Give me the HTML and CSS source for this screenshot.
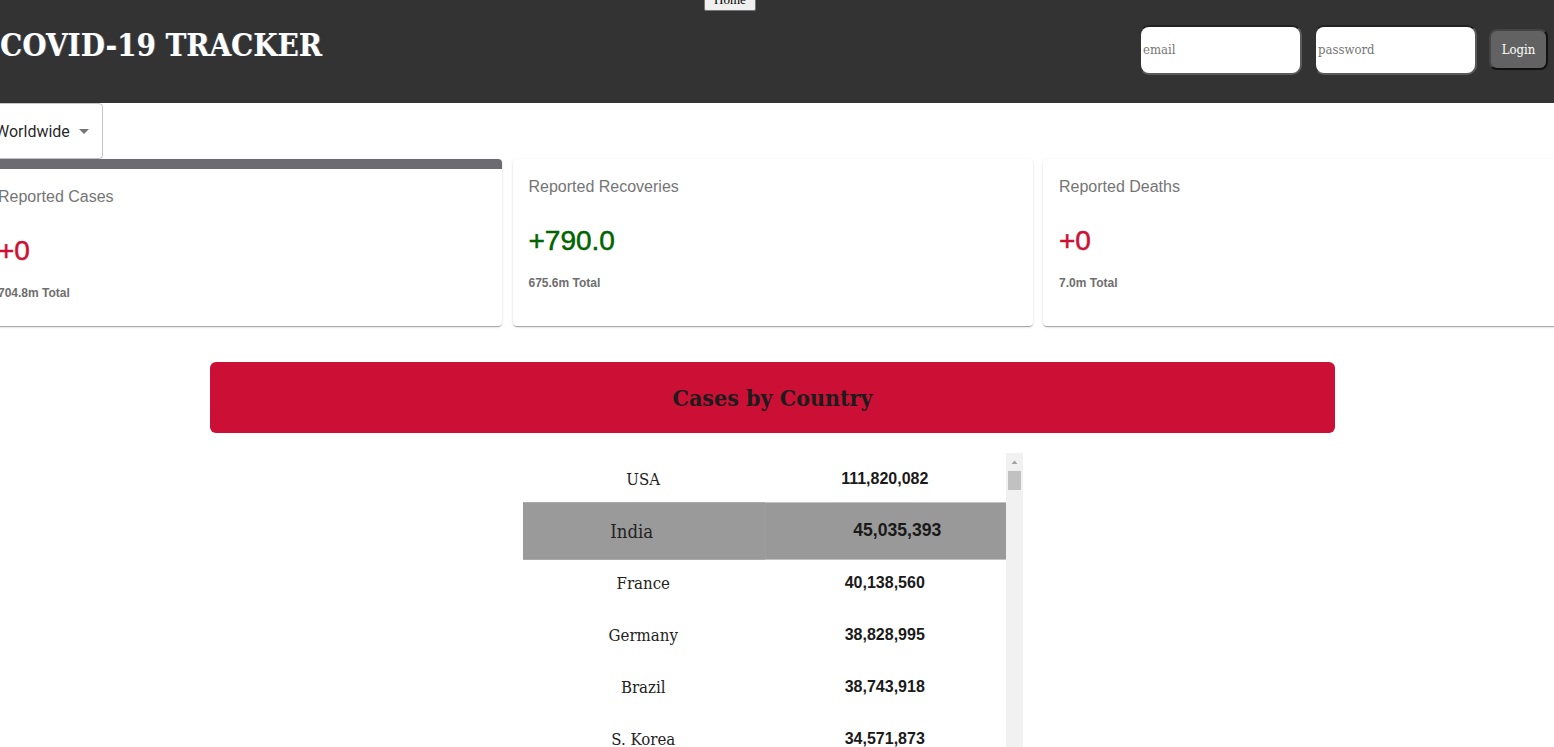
FILE: index.html
```html
<!DOCTYPE html>
<html>
<head>
<meta charset="utf-8">
<link rel="stylesheet" href="styles.css">
</head>
<body>
<header class="topbar">
  <button class="home-btn">Home</button>
  <h1 class="brand">COVID-19 TRACKER</h1>
  <form class="login">
    <input class="field" type="text" placeholder="email">
    <input class="field" type="password" placeholder="password">
    <button class="login-btn" type="button">Login</button>
  </form>
</header>
<main class="main">
  <div class="select">
    <span class="select-text">Worldwide</span>
    <svg class="caret" width="10" height="5" viewBox="0 0 10 5"><path d="M0 0h10L5 5z" fill="#757575"/></svg>
  </div>
  <section class="cards">
    <div class="card card-active">
      <div class="card-title">Reported Cases</div>
      <div class="card-value red">+0</div>
      <div class="card-total">704.8m Total</div>
    </div>
    <div class="card">
      <div class="card-title">Reported Recoveries</div>
      <div class="card-value green">+790.0</div>
      <div class="card-total">675.6m Total</div>
    </div>
    <div class="card">
      <div class="card-title">Reported Deaths</div>
      <div class="card-value red">+0</div>
      <div class="card-total">7.0m Total</div>
    </div>
  </section>
  <div class="banner">Cases by Country</div>
  <div class="table-wrap">
    <div class="table-view">
      <table class="table">
        <tbody>
          <tr><td class="country">USA</td><td class="num">111,820,082</td></tr>
          <tr class="hover"><td class="country">India</td><td class="num">45,035,393</td></tr>
          <tr><td class="country">France</td><td class="num">40,138,560</td></tr>
          <tr><td class="country">Germany</td><td class="num">38,828,995</td></tr>
          <tr><td class="country">Brazil</td><td class="num">38,743,918</td></tr>
          <tr><td class="country">S. Korea</td><td class="num">34,571,873</td></tr>
          <tr><td class="country">Japan</td><td class="num">33,803,572</td></tr>
          <tr><td class="country">Italy</td><td class="num">26,723,249</td></tr>
        </tbody>
      </table>
    </div>
    <div class="scrollbar">
      <svg class="scroll-arrow" width="17" height="17" viewBox="0 0 17 17"><path d="M5.5 11h6L8.5 7.5z" fill="#a3a3a3"/></svg>
      <div class="scroll-thumb"></div>
    </div>
  </div>
</main>
</body>
</html>
```
FILE: styles.css
```css
* { box-sizing: border-box; }
html, body { margin: 0; padding: 0; }
body {
  background: #fff;
  overflow: hidden;
  font-family: "DejaVu Serif", serif;
}
.topbar {
  position: relative;
  height: 103px;
  background: #333333;
  display: flex;
  align-items: center;
  justify-content: space-between;
  padding: 0 6px 0 0;
}
.home-btn {
  position: absolute;
  top: -12px;
  left: 704px;
  width: 52px;
  height: 23px;
  font-family: "Liberation Serif", serif;
  font-size: 13px;
  background: #efefef;
  border: 1px solid #767676;
  border-radius: 2px;
  padding: 0;
  line-height: 18px;
  color: #000;
}
.brand {
  margin: -14px 0 0 0;
  font-family: "DejaVu Serif", serif;
  font-stretch: condensed;
  font-weight: bold;
  font-size: 31px;
  color: #fff;
  text-shadow: 1px 0 0 rgba(150,190,255,0.35);
}
.login {
  display: flex;
  align-items: center;
  gap: 12px;
  margin-top: -4px;
}
.field {
  width: 163px;
  height: 50px;
  border: 2px solid #5a5a5a;
  border-top-color: #222;
  border-left-color: #333;
  border-radius: 10px;
  background: #fff;
  padding: 0 2px;
  font-family: "DejaVu Serif", serif;
  font-stretch: condensed;
  font-size: 13px;
  color: #333;
}
.field::placeholder { color: #777; }
.login-btn {
  width: 59px;
  height: 41px;
  background: #626262;
  color: #fff;
  border: 2px solid #111;
  border-top-color: #444;
  border-left-color: #444;
  border-radius: 8px;
  font-family: "DejaVu Serif", serif;
  font-stretch: condensed;
  font-size: 13px;
  padding: 0;
}
.main {
  margin-left: -18px;
  width: 1581px;
}
.select {
  width: 121px;
  height: 56px;
  border: 1px solid rgba(0,0,0,0.23);
  border-radius: 4px;
  display: flex;
  align-items: center;
  padding: 0 13px 0 14px;
  justify-content: space-between;
  font-family: Roboto, sans-serif;
  font-size: 16px;
  color: rgba(0,0,0,0.87);
}
.select-text { margin-left: -2px; }
.caret { margin-top: 1px; }
.cards {
  display: grid;
  grid-template-columns: repeat(3, 520px);
  column-gap: 10.5px;
}
.card {
  height: 167px;
  background: #fff;
  border-radius: 4px;
  box-shadow: 0 2px 1px -1px rgba(0,0,0,.2), 0 1px 1px 0 rgba(0,0,0,.14), 0 1px 3px 0 rgba(0,0,0,.12);
  padding: 16px;
  font-family: "Liberation Sans", Arial, sans-serif;
}
.card-active { border-top: 10px solid #6b6b70; }
.card-title {
  font-size: 16px;
  line-height: 24px;
  color: #757575;
}
.card-value {
  margin-top: 23px;
  font-size: 28px;
  line-height: 37px;
  font-weight: 400;
  -webkit-text-stroke: 0.5px currentColor;
}
.red { color: #cc1034; }
.green { color: #006400; }
.card-total {
  margin-top: 14px;
  font-size: 12px;
  line-height: 20px;
  font-weight: bold;
  color: #6e6e6e;
}
.banner {
  width: 1125px;
  margin: 36px auto 0;
  height: 71px;
  background: #cc0f35;
  border-radius: 6px;
  display: flex;
  align-items: center;
  justify-content: center;
  font-family: "DejaVu Serif", serif;
  font-stretch: condensed;
  font-weight: bold;
  font-size: 23px;
  color: #1c1c1c;
}
.table-wrap {
  width: 500px;
  height: 320px;
  margin: 20px auto 0;
  display: flex;
}
.table-view {
  flex: 1;
  overflow: hidden;
}
.scrollbar {
  width: 17px;
  background: #f1f1f1;
  display: flex;
  flex-direction: column;
  align-items: center;
}
.scroll-arrow { display: block; }
.scroll-thumb {
  width: 13px;
  height: 19px;
  margin-top: 1px;
  background: #c1c1c1;
}
.table {
  width: 100%;
  border-collapse: collapse;
  table-layout: fixed;
}
.table tr { height: 52px; }
.table td {
  text-align: center;
  padding: 0;
  vertical-align: middle;
}
.country {
  font-family: "DejaVu Serif", serif;
  font-stretch: condensed;
  font-size: 16.7px;
  color: #222;
}
.num {
  font-family: "Liberation Sans", sans-serif;
  font-weight: bold;
  font-size: 16px;
  color: #1a1a1a;
}
.hover {
  background: #999999;
  transform: scale(1.1);
}
.hover .country { background: #9a9a9a; }
```
